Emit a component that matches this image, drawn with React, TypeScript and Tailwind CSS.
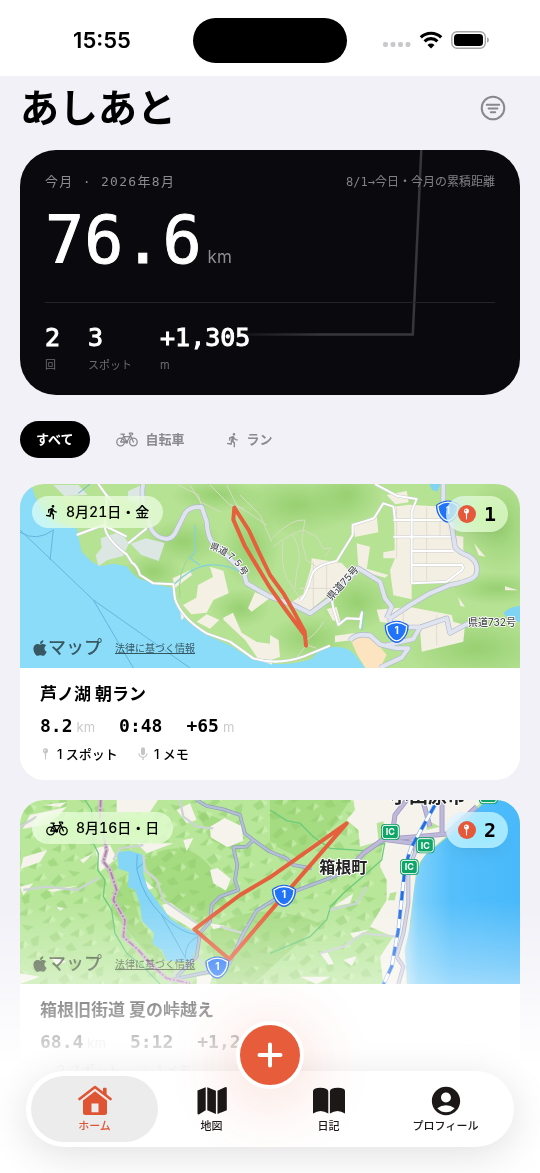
import React, { useState } from 'react';
import { FaApple } from 'react-icons/fa';
import { MdDirectionsRun, MdAccountCircle, MdMic } from 'react-icons/md';

type Kind = 'run' | 'bike';

interface Trip {
  id: string;
  kind: Kind;
  date: string;
  title: string;
  distance: string;
  duration: string;
  climb: string;
  spots: number;
  memos: number;
}

const TRIPS: Trip[] = [
  { id: 'ashinoko', kind: 'run', date: '8月21日・金', title: '芦ノ湖 朝ラン', distance: '8.2', duration: '0:48', climb: '+65', spots: 1, memos: 1 },
  { id: 'hakone', kind: 'bike', date: '8月16日・日', title: '箱根旧街道 夏の峠越え', distance: '68.4', duration: '5:12', climb: '+1,240', spots: 2, memos: 1 },
];

const MONO = "font-['DejaVu_Sans_Mono','Noto_Sans_CJK_JP',monospace]";

function BikeIcon({ className }: { className?: string }) {
  return (
    <svg viewBox="0 0 22 15" className={className} fill="none" stroke="currentColor" strokeWidth="1.3" strokeLinecap="round" strokeLinejoin="round" aria-hidden="true">
      <circle cx="4.6" cy="10" r="3.8" />
      <circle cx="17.4" cy="10" r="3.8" />
      <path d="M4.6 10 7.6 4.6h6.6L10.6 10H4.6M10.6 10 6.8 2.2M5 2.2h3.4M17.4 10 13.4 1.2h2.4c1.2 0 1.2 1.6 0 1.6" />
      <circle cx="10.6" cy="10" r="1" fill="currentColor" />
    </svg>
  );
}

function PinIcon({ className }: { className?: string }) {
  return (
    <svg viewBox="0 0 8 14" className={className} fill="currentColor" aria-hidden="true">
      <path fillRule="evenodd" d="M4 .5a3 3 0 0 1 .8 5.9L4.5 13q-.5 1-1 0L3.2 6.400A3 3 0 0 1 4 .5ZM3.100 2a.8.8 0 1 0 .01 0Z" />
    </svg>
  );
}

function KindIcon({ kind }: { kind: Kind }) {
  return kind === 'bike'
    ? <BikeIcon className="h-[15px] w-[22px]" />
    : <MdDirectionsRun className="-mx-0.5 size-4" />;
}

function HomeIcon() {
  return (
    <svg viewBox="0 0 34 32" className="h-8 w-[34px]" aria-hidden="true">
      <path d="M1.500 14 17 2l15.500 12" fill="none" stroke="currentColor" strokeWidth="2.600" strokeLinecap="round" strokeLinejoin="round" />
      <path d="M25 3.500q0-.8.8-.8h2q.8 0 .8.8v8L25 8.700Z" fill="currentColor" />
      <path fillRule="evenodd" d="M17 6.200 29 15.500V27.500q0 2.500-2.500 2.500h-19Q5 30 5 27.500v-12ZM13.500 18.500v8.700h7v-8.700Z" fill="currentColor" />
    </svg>
  );
}

function MapIcon() {
  return (
    <svg viewBox="0 0 32 32" className="size-8" fill="currentColor" aria-hidden="true">
      <path d="M1.500 5.500 9.700 2.300v23L3.200 29.200Q1.500 30 1.500 28.300ZM11.300 2.300l8.600 3.400v23.200l-8.600-3.600ZM21.500 5.700 29 2.200q1.800-.7 1.800 1v22L21.500 28.900Z" />
    </svg>
  );
}

function BookIcon() {
  return (
    <svg viewBox="0 0 34 32" className="h-8 w-[34px]" fill="currentColor" aria-hidden="true">
      <path d="M1 6.500Q1 2.800 8.300 2.800T16.300 6.500V28.500Q8.500 23.500 1 28.500ZM17.900 6.500Q18 2.800 25.700 2.800T33 6.500V28.500Q25.500 23.500 17.900 28.500Z" />
    </svg>
  );
}

function RouteShield({ x, y }: { x: number; y: number }) {
  return (
    <g transform={`translate(${x} ${y})`}>
      <path d="M-36-17Q0-44 36-17 37 12 15 30 0 42-15 30-37 12-36-17Z" fill="#1a66ee" />
      <path d="M-30-15Q0-36 30-15 30 10 12 25 0 34-12 25-30 10-30-15Z" fill="#2173f7" stroke="#fff" strokeWidth="4" />
      <text y="9" textAnchor="middle" fontSize="30" fontWeight="700" fill="#fff">1</text>
    </g>
  );
}

function Interchange({ x, y }: { x: number; y: number }) {
  return (
    <g transform={`translate(${x} ${y})`}>
      <rect x="-28" y="-24" width="56" height="48" rx="12" fill="#0f9d63" />
      <rect x="-24" y="-20" width="48" height="40" rx="8" fill="#10a568" stroke="#fff" strokeWidth="3" />
      <text y="10" textAnchor="middle" fontSize="27" fontWeight="700" fill="#fff">IC</text>
    </g>
  );
}

const MAP_TEXT = "font-['Inter','Noto_Sans_CJK_JP',sans-serif]";

function AshinokoMap() {
  const major = 'M1300 27V90L1325 150 1335 215Q1345 232 1375 242 1410 262 1398 300 1385 318 1320 330L1260 355 1200 390 1140 430 1145 480M1125 512 1210 492 1230 457 1180 457M1230 457 1310 430 1320 474 1375 445M1020 497Q1035 474 1080 481L1110 508 1160 520H1195L1175 548 1110 578M400 27Q392 55 405 110L425 165Q440 190 470 192 490 190 500 165L525 115Q538 94 575 96L590 140Q592 180 605 200L700 290 710 325 780 365 850 390 900 415 960 372 1045 280 1110 320 1125 370 1145 395 1130 430';
  const minor = 'M265 27 290 62 285 160Q292 195 350 238L365 262Q382 272 390 300L430 325 490 328 495 372Q515 430 590 475L660 500 730 550Q800 572 880 545L960 512M870 378Q890 360 905 300 915 270 980 258L1028 180V150L1092 130 1120 85 1150 95 1155 135M1095 27 1160 62 1220 72 1205 110V325M1150 135H1310M1150 185H1325M1205 228H1330M1205 270H1355Q1365 280 1350 290L1310 320 1205 325M965 370 970 400 985 450 1010 430 1050 432 1056 412 1050 460M290 60 330 110M200 180 280 150 350 185M355 205 410 160';
  return (
    <svg viewBox="30 27 1500 552" preserveAspectRatio="xMidYMid slice" className={`h-full w-full ${MAP_TEXT}`} role="img" aria-label="芦ノ湖周辺の地図">
      <defs>
        <radialGradient id="hill">
          <stop offset="0" stopColor="#98d072" />
          <stop offset="1" stopColor="#98d072" stopOpacity="0" />
        </radialGradient>
      </defs>
      <rect x="30" y="27" width="1500" height="552" fill="#b6e294" />
      <g fill="url(#hill)">
        <ellipse cx="860" cy="90" rx="180" ry="90" />
        <ellipse cx="1010" cy="60" rx="110" ry="90" />
        <ellipse cx="520" cy="200" rx="120" ry="70" />
        <ellipse cx="620" cy="60" rx="140" ry="50" />
        <ellipse cx="720" cy="220" rx="90" ry="120" />
        <ellipse cx="1470" cy="150" rx="110" ry="150" />
        <ellipse cx="1400" cy="520" rx="220" ry="100" />
        <ellipse cx="1040" cy="380" rx="110" ry="90" />
        <ellipse cx="900" cy="490" rx="130" ry="70" />
        <ellipse cx="430" cy="290" rx="90" ry="60" />
        <ellipse cx="690" cy="400" rx="90" ry="60" />
        <ellipse cx="1460" cy="340" rx="140" ry="50" />
      </g>
      <path d="M30 27h35q10 60 60 110l75 23q8 40 15 70l30 30 25 14 40-8 40 8q20 28 40 38l55 18 50 10 5 50 30 48 60 42 75 34 60 38 60 14q60 6 120-15 22-33 70-36 45 0 65 30l25 34H30Z" fill="#8adcf8" />
      <path d="M1480 414q20-20 50-22v48q-30 4-50-26ZM1258 27h34l-10 22-16-4Z" fill="#7fd3f3" />
      <path d="M130 30h75l28 30-70 3ZM272 190l58-20 27 35-18 38-46 12-28 18-8-32 18-22ZM362 206l46-16 56 14-18 54-52-18ZM355 48l45-20-14 58-34-10Z" fill="#dce7e3" />
      <path d="M600 275l40 12 16 68-46 20-20 38-46 5-25-28 40-22 5-38 45-24ZM488 310l52-24 6 14-50 38ZM735 352l44 18-54 40-11-10ZM560 440l30-22 38 17-28 26ZM640 428l29-15 26 60 45 28 46 6v62l-40-15-40-58-66-62ZM780 480l26 16 4 50-30 10ZM510 405l18 18-14 12Z" fill="#f4f0e4" />
      <path d="M1152 95l43-6 110 6 20 85 35 5v40l35 35-5 50-90 15h-95v48l-55-12-10-75 15-36h-35v-18l34-6ZM1130 60l60-12 6 34-40 6ZM905 250l90 14 25 26-40 50-85 70-58-22 42-30 24-80ZM1100 404l100-8 125 24 5 20 35 10-5 50-125 30-5-70-120-20ZM1030 152l70-32 5 52-70 14ZM950 402l30-6 12 46-24-6ZM1392 205l34 40-20-4ZM1345 366l20 30-14-4ZM1485 334l40 12-40 0ZM1040 205l40 10-10 70-25-10ZM975 482l60-8v20l-60 8ZM1065 280l70 20-10 8-58-16Z" fill="#f4efe3" />
      <path d="M1020 490q40-20 70 0l40 50-20 39h-44l-24-40Z" fill="#fbe4bf" />
      <path d="M490 330q60-58 110-60 60-2 100 26M555 150v80l-14 20 28 20M1060 405l-4 60" fill="none" stroke="#86d3d6" strokeWidth="4" />
      <path d="M510 370q-10-80 34-134" fill="none" stroke="#9fd694" strokeWidth="3" />
      <path d="M1160 100v150M1250 95v230M1290 100v90M910 260v140M950 265v120M870 340h130M1280 420v90M1180 400v50" fill="none" stroke="#e0dccf" strokeWidth="3" />
      <path d="M785 190q60-60 100-55l-10 60 14 60 30 20M790 215q50-40 90-50l40 20 20 36 24-2-20 26M820 200q-10 60 10 110l40 60M850 180q30 60 10 110l-5 50M600 30l60 60 40 10M650 30l30 60 90 60M505 30l60 30 10 35M690 60l60 60 35 80M540 30l30 50 60 30M880 500q40-20 60-60M850 560l40-50 30 10" fill="none" stroke="#d5ddc3" strokeWidth="3" />
      <path d="M30 165 250 375 540 579M250 375 370 579M30 172q50 30 100-7l-10 90M205 55l35-28" fill="none" stroke="#64b6de" strokeWidth="3" />
      <path d={minor} fill="none" stroke="#c9cdd0" strokeWidth="9" strokeLinejoin="round" />
      <path d={minor} fill="none" stroke="#fff" strokeWidth="6" strokeLinejoin="round" />
      <path d={major} fill="none" stroke="#b3bace" strokeWidth="16" strokeLinejoin="round" />
      <path d={major} fill="none" stroke="#dfe4ef" strokeWidth="12" strokeLinejoin="round" />
      <RouteShield x={1314} y={107} />
      <RouteShield x={1160} y={468} />
      <path id="road-a" d="M598 220Q676 244 708 322" fill="none" />
      <g fontWeight="500" fill="#4a4d50" stroke="#fff" strokeWidth="5" strokeLinejoin="round" paintOrder="stroke">
        <text fontSize="27"><textPath href="#road-a">県道７５号</textPath></text>
        <text fontSize="30" transform="translate(964 378) rotate(-48)">県道75号</text>
        <text fontSize="30" x="1374" y="452">県道732号</text>
      </g>
      <path d="M673 98 670 134 705 214 780 338 830 408 885 482 888 512 884 470 845 398 820 355 780 300 750 238 716 165Z" fill="none" stroke="#e5603c" strokeWidth="12" strokeLinejoin="round" />
    </svg>
  );
}

function HakoneMap() {
  const roads = 'M560 30 590 48 640 58 690 75 705 130 730 150 710 170 670 172 682 225 675 270 685 300 630 320 605 345 600 395 570 430 560 500 500 560M730 150 780 185 830 205 850 225 905 235M480 570 600 545 658 520 700 430 740 362 800 325 870 298 950 268 1010 245';
  const highway = 'M1010 245 1060 190 1120 148 1220 140 1310 132 1400 50M1150 110 1155 75 1190 30M1238 30 1260 110M1296 30V130M1120 148 1210 160 1220 190';
  const local = 'M30 110 80 80M40 300 110 290 200 300 265 265M310 210 330 175 400 165M400 195 405 240 440 270 460 330 560 400M630 410 700 430M510 30 520 80 560 110 610 115M1070 290 1040 340 960 360M1160 440 1060 430 1000 470 930 490M500 540 480 582M560 500 600 545';
  const coast = 'M1222 170 1195 240 1195 340 1180 430 1160 500 1180 530 1165 582';
  const border = 'M272 30 270 90 290 180 280 215 300 240 320 300 310 330 345 390 340 440 385 480 420 520 470 565 540 580';
  const rail = 'M1275 45 1205 170Q1185 220 1180 280L1165 420 1145 530 1120 584';
  return (
    <svg viewBox="30 30 1500 552" preserveAspectRatio="xMidYMid slice" className={`h-full w-full ${MAP_TEXT}`} role="img" aria-label="箱根町周辺の地図">
      <defs>
        <linearGradient id="sea" x1="0" x2="1" y1="0" y2="0">
          <stop offset="0" stopColor="#b5e2f6" />
          <stop offset="0.12" stopColor="#7dd0fb" />
          <stop offset="0.4" stopColor="#55bffb" />
          <stop offset="1" stopColor="#48b9fa" />
        </linearGradient>
        {/* mountain ridges */}
        <pattern id="ridges" width="170" height="130" patternUnits="userSpaceOnUse" patternTransform="rotate(-12)">
          <path d="M10 20 46 4 30 26ZM60 38 92 18 100 34 72 50ZM120 12 156 26 132 34ZM22 66 50 54 58 78 34 84ZM84 72 118 60 110 86ZM136 62 164 54 156 82 140 84ZM6 108 36 98 26 120ZM64 104 86 96 96 122 70 120ZM112 112 150 98 142 120Z" fill="#8fcb6b" opacity="0.45" />
          <path d="M46 4 54 22 30 26ZM92 18 112 26 100 34ZM50 54 70 66 58 78ZM118 60 130 76 110 86ZM36 98 48 110 26 120ZM150 98 162 112 142 120Z" fill="#d3f3ba" opacity="0.55" />
        </pattern>
      </defs>
      <rect x="30" y="30" width="1500" height="552" fill="#b8e79a" />
      <path d="M400 210q120-80 200 20l60 80-80 80-130-60ZM350 250l40 140 80 120-60-20-110-130ZM600 420q140-100 330-20l-200 182H620ZM780 30h240l-60 90-100 80-80-40ZM560 60l130 50v80l-90-40Z" fill="#a5db81" />
      <rect x="30" y="30" width="1500" height="552" fill="url(#ridges)" />
      <g fill="#f5f3eb">
        <path d="M1030 30H1420L1320 130 1250 190 1220 230 1190 480V582H1120L1110 500 1150 440 1080 410 1130 330V270L1110 230 1120 150 1050 170 1045 120 1010 90 1035 60Z" />
        <path d="M600 110l44-26 50 24 6 44-48 20-50-30ZM60 75l110-24-50 50-82 16ZM40 202l72-22-22 36-58 20ZM600 240l22-6 40 32-14 36-38-22ZM456 344l26-6 80 62-12 20-80-48ZM320 30h124l-24 36h-100ZM255 175l45-10 20 40-50 40ZM380 160l110 0-80 30ZM30 290l40-10-30 36ZM110 300l100-14-80 20ZM140 350l22 4-12 8ZM210 210l40-20-30 30ZM500 60l40-20 20 50-30 10ZM405 270l26 24-18 6ZM520 150l30-6-20 40ZM600 400l50 8-40 10ZM100 45l70-8-20 14ZM120 500l50 14-30 10ZM30 550l60 10-60 22Z" />
        <path d="M930 490l20-8 22 40-16 2ZM1020 430l60-12-50 26ZM1000 510l40-12-14 30ZM870 560l90 0-40 22ZM970 350l60-40-10 30ZM560 560l50-8-10 30h-40Z" />
      </g>
      <path d="M1100 100l20-6 8 60-20 20ZM1140 310l20-5-6 26h-20ZM1250 90l40 20-40 10ZM1160 480l10 30-20-8Z" fill="#b8e398" />
      <path d="M1430 30Q1400 60 1320 135L1250 192Q1222 220 1212 300L1200 410 1184 480 1192 582H1530V30Z" fill="url(#sea)" />
      <path d="M322 186 360 182 400 195V250L412 292 450 346 482 386 522 412 568 432 560 472 545 515 470 512 455 480 428 462 432 430 396 392 390 342 375 300 354 290 356 246 325 236Z" fill="#84d5f6" />
      <path d="M382 194Q378 240 384 250 400 320 455 375T570 436M382 235l16-14M455 375 530 510M570 436q-46 20-44 64" fill="none" stroke="#5fb2de" strokeWidth="3" />
      <path d="M225 30 245 60 250 160 265 190 263 240 285 270 280 320 305 360 315 430 350 490 400 530 450 582M780 60 830 92 870 100 910 140 960 175 1060 182 1124 160 1115 210 1070 250 1000 310 962 350 950 390 900 440 780 490" fill="none" stroke="#6bcb7c" strokeWidth="4" />
      <path d={local} fill="none" stroke="#ccd5d3" strokeWidth="7" strokeLinejoin="round" />
      <path d={roads} fill="none" stroke="#8f9dbb" strokeWidth="11" strokeLinejoin="round" />
      <path d={roads} fill="none" stroke="#b3bfd4" strokeWidth="7" strokeLinejoin="round" />
      <path d={highway} fill="none" stroke="#a39bc6" strokeWidth="15" strokeLinejoin="round" />
      <path d={highway} fill="none" stroke="#beb9d9" strokeWidth="10" strokeLinejoin="round" />
      <path d={coast} fill="none" stroke="#b0b1cb" strokeWidth="12" strokeLinejoin="round" />
      <path d={coast} fill="none" stroke="#d3d4e4" strokeWidth="7" strokeLinejoin="round" />
      <path d={border} fill="none" stroke="#cfbfce" strokeWidth="13" strokeLinejoin="round" />
      <path d={border} fill="none" stroke="#b27cab" strokeWidth="5" strokeDasharray="22 5 6 5" />
      <path d={rail} fill="none" stroke="#8db4ea" strokeWidth="12" />
      <path d={rail} fill="none" stroke="#fff" strokeWidth="8" />
      <path d={rail} fill="none" stroke="#226fe4" strokeWidth="9" strokeDasharray="28 28" />
      <Interchange x={1141} y={126} />
      <Interchange x={1246} y={166} />
      <Interchange x={1198} y={231} />
      <Interchange x={1435} y={18} />
      <path d="M1010 100 780 262 690 315 553 418 658 508 780 365Z" fill="none" stroke="#e5603c" strokeWidth="12" strokeLinejoin="round" />
      <RouteShield x={822} y={315} />
      <RouteShield x={622} y={530} />
      <g fontWeight="700" fill="#222" stroke="#fff" strokeWidth="6" strokeLinejoin="round" paintOrder="stroke">
        <text fontSize="48" x="928" y="250">箱根町</text>
        <text fontSize="57" x="1140" y="40">小田原市</text>
      </g>
    </svg>
  );
}

function StatusBar() {
  return (
    <div className="grid h-[76px] grid-cols-3 items-center bg-white pt-1">
      <span className="pl-6 text-center text-[22px] font-semibold">15:55</span>
      <div className="h-[45px] w-[154px] justify-self-center rounded-full bg-black" />
      <div className="flex items-center justify-end gap-2 pr-[50px]">
        <svg viewBox="0 0 28 6" className="mt-2.5 h-1.5 w-7" fill="#c9c9cb" aria-hidden="true">
          <rect x="0" y="0" width="5" height="5" rx="2" />
          <rect x="7.500" y="0" width="5" height="5" rx="2" />
          <rect x="15" y="0" width="5" height="5" rx="2" />
          <rect x="22.500" y="0" width="5" height="5" rx="2" />
        </svg>
        <svg viewBox="0 0 24 18" className="h-[18px] w-6" aria-hidden="true">
          <path d="M1.800 6.400a14.600 14.600 0 0 1 20.400 0M5.600 10.300a9.200 9.200 0 0 1 12.800 0" fill="none" stroke="#000" strokeWidth="3.200" />
          <path d="M12 17.500 8.500 13.900a5 5 0 0 1 7 0Z" />
        </svg>
        <svg viewBox="0 0 39 18" className="h-[18px] w-[39px]" aria-hidden="true">
          <rect x=".8" y=".8" width="33.500" height="16.400" rx="5.200" fill="none" stroke="#a5a5a7" strokeWidth="1.400" />
          <rect x="3" y="3" width="29" height="12" rx="3.500" />
          <path d="M36 6.200q2 .8 2 2.800t-2 2.800Z" fill="#a5a5a7" />
        </svg>
      </div>
    </div>
  );
}

function MonthCard() {
  const stats = [
    { value: '2', label: '回' },
    { value: '3', label: 'スポット' },
    { value: '+1,305', label: 'm' },
  ];
  return (
    <section className="relative mt-2.5 overflow-hidden rounded-[36px] bg-[#0a0a0e] px-[25px] pt-6 pb-[22px] text-white">
      <svg viewBox="0 0 500 245" preserveAspectRatio="none" className="absolute inset-0 h-full w-full" aria-hidden="true">
        <defs>
          <linearGradient id="trend" gradientUnits="userSpaceOnUse" x1="200" x2="300" y1="0" y2="0">
            <stop offset="0" stopColor="#37373b" stopOpacity="0" />
            <stop offset="1" stopColor="#37373b" />
          </linearGradient>
        </defs>
        <path d="M200 184.500H392.800L401.300 0" fill="none" stroke="url(#trend)" strokeWidth="2.500" />
      </svg>
      <div className="relative">
        <div className={`flex h-4 items-center justify-between ${MONO}`}>
          <span className="text-[13px] tracking-widest text-[#8c8c90]">今月 · 2026年8月</span>
          <span className="text-xs text-[#808085]">8/1→今日・今月の累積距離</span>
        </div>
        <p className="mt-[18px] flex items-baseline gap-1.5">
          <span className={`text-[65px] leading-[66px] [-webkit-text-stroke:1px_white] ${MONO}`}>76.6</span>
          <span className="text-[17px] leading-6 text-[#8c8c90]">km</span>
        </p>
        <dl className="mt-7 flex gap-7 border-t border-[#242428] pt-5">
          {stats.map((s) => (
            <div key={s.label} className="flex flex-col-reverse gap-1">
              <dt className="text-[11px] leading-4 text-[#6c6c71]">{s.label}</dt>
              <dd className={`text-[25px] leading-[30px] [-webkit-text-stroke:1px_white] ${MONO}`}>{s.value}</dd>
            </div>
          ))}
        </dl>
      </div>
    </section>
  );
}

function TripCard({ trip }: { trip: Trip }) {
  return (
    <article className="overflow-hidden rounded-[24px] bg-white">
      <div className="relative h-[184px]">
        {trip.id === 'ashinoko' ? <AshinokoMap /> : <HakoneMap />}
        <div className="absolute top-3 left-3 flex h-8 items-center gap-2 rounded-full bg-white/60 px-3.5 text-sm font-medium tabular-nums backdrop-blur-md backdrop-saturate-200">
          <KindIcon kind={trip.kind} />
          <span>{trip.date}</span>
        </div>
        <div className={`absolute top-3 right-3 flex h-9 items-center gap-2 rounded-full bg-white/60 px-3 text-xl font-bold shadow-lg shadow-black/5 backdrop-blur-md backdrop-saturate-200 ${MONO}`}>
          <span className="flex size-[18px] items-center justify-center rounded-full bg-[#e5593a] text-white">
            <PinIcon className="h-3 w-[7px]" />
          </span>
          {trip.spots}
        </div>
        <div className="absolute bottom-2 left-3 flex items-center gap-[13px] text-black/60">
          <span className="flex items-center text-lg leading-6 font-medium">
            <FaApple className="-mx-px size-[18px]" aria-hidden="true" />
            マップ
          </span>
          <a href="#legal" className="text-[10px] leading-4 underline">法律に基づく情報</a>
        </div>
      </div>
      <div className="px-5 pt-3.5 pb-4">
        <h2 className="text-[17px] leading-6 font-bold">{trip.title}</h2>
        <div className={`mt-2 flex h-6 gap-6 text-lg leading-6 font-bold ${MONO}`}>
          <span>{trip.distance}<Unit>km</Unit></span>
          <span>{trip.duration}</span>
          <span>{trip.climb}<Unit>m</Unit></span>
        </div>
        <div className="mt-1.5 flex gap-[18px] text-[13px] leading-5 font-medium">
          <span className="flex items-center gap-1.5">
            <PinIcon className="mx-0.5 h-3.5 w-[7px] text-[#c5c5c8]" />
            {trip.spots} スポット
          </span>
          <span className="flex items-center gap-1">
            <MdMic className="-mx-px size-4 text-[#c5c5c8]" />
            {trip.memos} メモ
          </span>
        </div>
      </div>
    </article>
  );
}

function Unit({ children }: { children: React.ReactNode }) {
  return <span className="ml-1 font-['Inter',sans-serif] text-[13px] font-normal text-[#cacacd]">{children}</span>;
}

function TabBar() {
  const tabs = [
    { label: 'ホーム', icon: <HomeIcon />, active: true },
    { label: '地図', icon: <MapIcon /> },
    { label: '日記', icon: <BookIcon /> },
    { label: 'プロフィール', icon: <MdAccountCircle className="size-[34px]" /> },
  ];
  return (
    <>
      <div className="pointer-events-none fixed inset-x-0 bottom-0 h-[273px] bg-[linear-gradient(to_bottom,rgba(255,255,255,0),rgba(255,255,255,0.32)_24%,rgba(255,255,255,0.6)_40%,rgba(255,255,255,0.8)_52%,rgba(255,255,255,0.98)_61%,#fff)]" />
      <nav className="fixed inset-x-[26px] bottom-[26px] rounded-full bg-white px-2.5 py-[5px] shadow-[0_8px_40px_rgba(0,0,0,0.12)]">
        <button
          type="button"
          aria-label="記録を追加"
          className="absolute -top-[50px] left-1/2 flex size-[68px] -translate-x-1/2 items-center justify-center rounded-full border-4 border-white bg-[#e75d3b] shadow-[0_10px_60px_12px_rgba(231,93,59,0.16)]"
        >
          <svg viewBox="0 0 26 26" className="size-[26px]" fill="none" stroke="#fff" strokeWidth="4" strokeLinecap="round" aria-hidden="true">
            <path d="M13 2.500v21M2.500 13h21" />
          </svg>
        </button>
        <ul className="relative flex">
          {tabs.map((tab) => (
            <li key={tab.label} className="flex-1">
              <a
                href="#"
                className={`flex h-[66px] flex-col items-center rounded-full pt-2 text-[11px] leading-4 font-medium ${
                  tab.active ? '-mx-[5px] bg-[#ececec] text-[#df5433]' : 'text-[#1c1817]'
                }`}
              >
                <span className="flex h-[34px] items-center">{tab.icon}</span>
                {tab.label}
              </a>
            </li>
          ))}
        </ul>
      </nav>
    </>
  );
}

export default function App() {
  const [filter, setFilter] = useState<'all' | Kind>('all');

  const chips: { id: 'all' | Kind; label: string }[] = [
    { id: 'all', label: 'すべて' },
    { id: 'bike', label: '自転車' },
    { id: 'run', label: 'ラン' },
  ];

  return (
    <div lang="ja" className="min-h-screen bg-[#f2f1f8] font-['Inter','Noto_Sans_CJK_JP',sans-serif] text-black">
      <StatusBar />
      <main className="px-5 pb-[76px]">
        <header className="flex h-16 items-center justify-between pr-3.5">
          <h1 className="text-[39px] leading-[48px] font-bold">あしあと</h1>
          <button type="button" aria-label="並べ替え" className="text-[#88888d]">
            <svg viewBox="0 0 26 26" className="size-[26px]" fill="none" stroke="currentColor" strokeWidth="2" strokeLinecap="round" aria-hidden="true">
              <circle cx="13" cy="13" r="11.300" />
              <path d="M6.800 9.800h12.400M8.600 13.500h8.800M10.800 17.200h4.400" />
            </svg>
          </button>
        </header>

        <MonthCard />

        {/* Filter chips */}
        <div className="mt-[26px] flex gap-2.5">
          {chips.map((chip) => (
            <button
              key={chip.id}
              type="button"
              onClick={() => setFilter(chip.id)}
              className={`flex h-[37px] items-center gap-2 rounded-full px-4 text-[13px] font-bold ${
                filter === chip.id ? 'bg-black text-white' : 'text-[#8a8a8f]'
              }`}
            >
              {chip.id !== 'all' && <KindIcon kind={chip.id} />}
              {chip.label}
            </button>
          ))}
        </div>

        {/* Trips */}
        <div className="mt-[26px] flex flex-col gap-5">
          {TRIPS.filter((t) => filter === 'all' || t.kind === filter).map((trip) => (
            <TripCard key={trip.id} trip={trip} />
          ))}
        </div>
      </main>
      <TabBar />
    </div>
  );
}
